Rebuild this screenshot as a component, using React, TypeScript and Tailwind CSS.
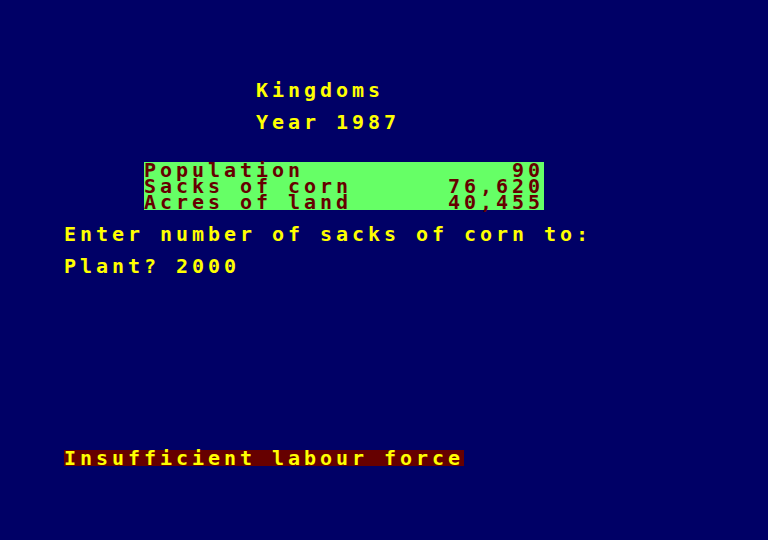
const font = {
  fontFamily: '"DejaVu Sans Mono", "Liberation Mono", monospace',
};

// One text cell is 16px wide and 16px tall, like the 40x25 mode 1 screen.
const cell = "h-4 leading-4 text-[20px] font-bold tracking-[3.96px] whitespace-pre";

const stats = [
  { label: "Population", value: "90" },
  { label: "Sacks of corn", value: "76,620" },
  { label: "Acres of land", value: "40,455" },
];

export default function App() {
  return (
    <div
      className="w-[768px] h-[540px] bg-[#000066] text-[#ffff00] pl-16 pt-[82px] flex flex-col overflow-hidden"
      style={font}
    >
      <div className={`${cell} ml-[192px]`}>Kingdoms</div>
      <div className={`${cell} ml-[192px] mt-4`}>Year 1987</div>

      <div className="ml-20 mt-8 w-[400px] bg-[#66ff66] text-[#660000] flex flex-col">
        {stats.map((s) => (
          <div key={s.label} className={`${cell} flex justify-between`}>
            <span>{s.label}</span>
            <span>{s.value}</span>
          </div>
        ))}
      </div>

      <div className={`${cell} mt-4`}>Enter number of sacks of corn to:</div>
      <div className={`${cell} mt-4`}>Plant? 2000</div>

      <div className={`${cell} mt-[176px] w-[400px] bg-[#660000]`}>Insufficient labour force</div>
    </div>
  );
}
